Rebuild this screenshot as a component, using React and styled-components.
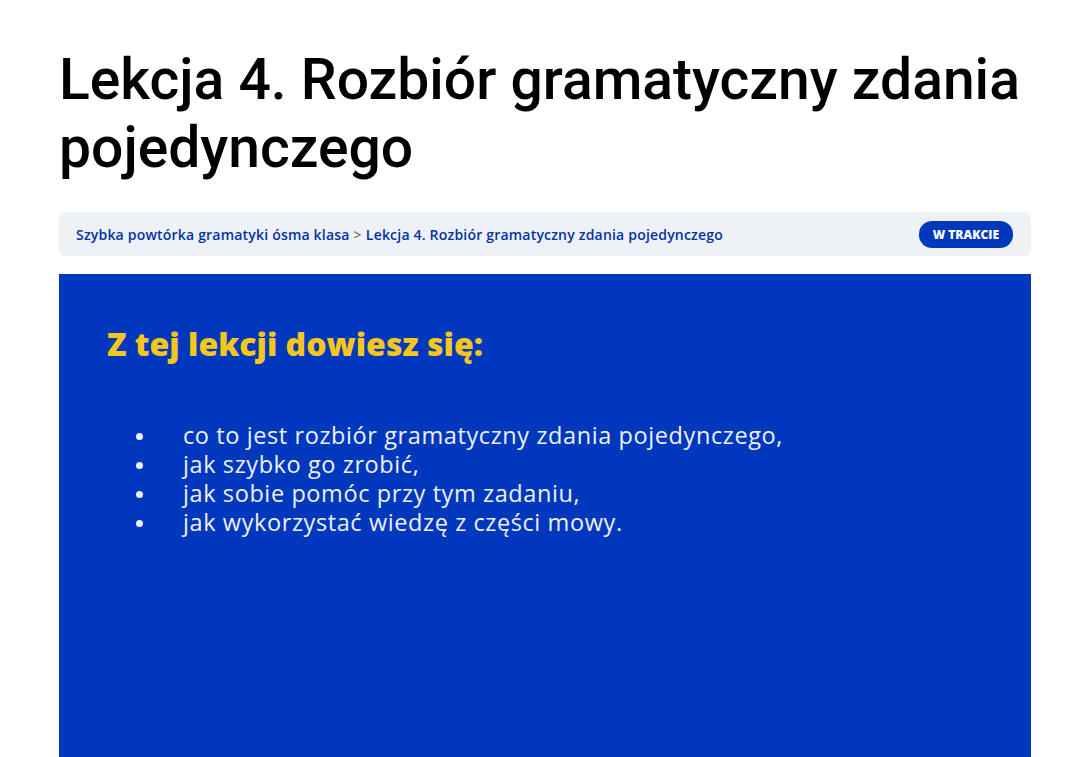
import React from "react";
import styled, { createGlobalStyle } from "styled-components";

const Global = createGlobalStyle`
  html, body { margin: 0; padding: 0; background: #fff; overflow: hidden; }
`;
const Page = styled.div`
  width: 972px;
  margin-left: 59px;
  padding-top: 46px;
  font-family: Roboto, "Noto Sans", sans-serif;
`;
const Title = styled.h1`
  margin: 0 0 30px;
  font-size: 57px;
  font-weight: 500;
  line-height: 68px;
  color: #000;
`;
const Crumbs = styled.div`
  display: flex;
  align-items: center;
  justify-content: space-between;
  height: 44px;
  padding: 0 18px 0 17px;
  background: #eef1f5;
  border-radius: 7px;
  font-family: "Open Sans", sans-serif;
  font-size: 14px;
  font-weight: 600;
  letter-spacing: 0.2px;
  color: #0033aa;
`;
const Sep = styled.span`
  color: #777;
  margin: 0 4px;
`;
const Badge = styled.span`
  background: #0038bd;
  color: #fff;
  font-size: 12px;
  font-weight: 800;
  letter-spacing: 0;
  padding: 5px 14px;
  border-radius: 13px;
`;
const Slide = styled.div`
  margin-top: 18px;
  height: 500px;
  background: #0038bd;
  padding: 48px 48px;
  box-sizing: border-box;
  font-family: "Open Sans", sans-serif;
`;
const SlideHead = styled.h2`
  margin: 0 0 56px;
  color: #f5c71c;
  font-size: 32px;
  font-weight: 800;
`;
const List = styled.ul`
  margin: 0;
  padding-left: 50px;
  color: #eef0fa;
  font-size: 23.5px;
  letter-spacing: 0.6px;
  line-height: 29px;
  font-weight: 400;
  li { padding-left: 26px; }
  li::marker { font-size: 20px; }
`;

export default function App() {
  return (
    <>
      <Global />
      <Page>
        <Title>Lekcja 4. Rozbiór gramatyczny zdania pojedynczego</Title>
        <Crumbs>
          <span>
            Szybka powtórka gramatyki ósma klasa<Sep>&gt;</Sep>Lekcja 4. Rozbiór gramatyczny zdania pojedynczego
          </span>
          <Badge>W TRAKCIE</Badge>
        </Crumbs>
        <Slide>
          <SlideHead>Z tej lekcji dowiesz się:</SlideHead>
          <List>
            <li>co to jest rozbiór gramatyczny zdania pojedynczego,</li>
            <li>jak szybko go zrobić,</li>
            <li>jak sobie pomóc przy tym zadaniu,</li>
            <li>jak wykorzystać wiedzę z części mowy.</li>
          </List>
        </Slide>
      </Page>
    </>
  );
}
